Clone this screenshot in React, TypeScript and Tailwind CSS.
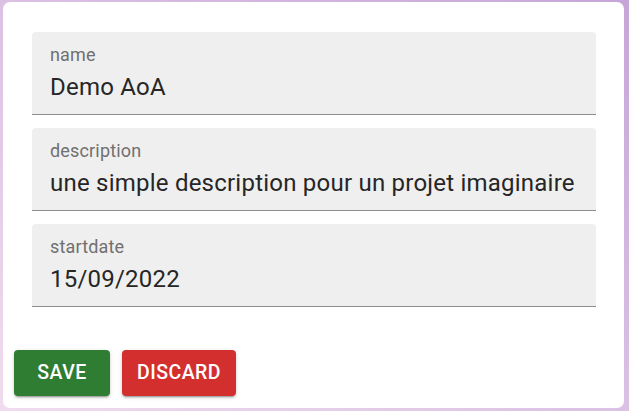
import React from "react";

function Field({ label, value }: { label: string; value: string }) {
  return (
    <div className="relative h-[83px] rounded-t-[4px] bg-[#efefef] border-b border-[#8c8c8c] px-[18px] pt-[12px]">
      <div className="text-[18px] leading-[22px] tracking-[0.00938em] text-[#707070]">{label}</div>
      <div className="mt-[7px] text-[24px] leading-[28px] tracking-[0.00938em] text-[#262626] whitespace-nowrap">{value}</div>
    </div>
  );
}

export default function App() {
  return (
    <div
      className="w-[629px] h-[411px] bg-gradient-to-tr from-[#f0dcee] to-[#c6a6d8] pl-[3px] pt-[2px] pr-[5px] pb-[3px]"
      style={{ fontFamily: "Roboto, 'Liberation Sans', sans-serif" }}
    >
      <div className="w-full h-full bg-white rounded-[7px] flex flex-col pt-[30px] pb-[12px] pl-[11px] pr-[28px]">
        <div className="flex flex-col gap-[13px] pl-[18px]">
          <Field label="name" value="Demo AoA" />
          <Field label="description" value="une simple description pour un projet imaginaire" />
          <Field label="startdate" value="15/09/2022" />
        </div>
        <div className="mt-auto flex gap-[12px]">
          <button className="h-[46px] w-[96px] rounded-[4px] bg-[#2e7d32] text-white text-[19.5px] font-medium tracking-[0.025em] shadow-[0_3px_1px_-2px_rgba(0,0,0,0.2),0_2px_2px_0_rgba(0,0,0,0.14),0_1px_5px_0_rgba(0,0,0,0.12)]">
            SAVE
          </button>
          <button className="h-[46px] w-[114px] rounded-[4px] bg-[#d32f2f] text-white text-[19.5px] font-medium tracking-[0.025em] shadow-[0_3px_1px_-2px_rgba(0,0,0,0.2),0_2px_2px_0_rgba(0,0,0,0.14),0_1px_5px_0_rgba(0,0,0,0.12)]">
            DISCARD
          </button>
        </div>
      </div>
    </div>
  );
}
